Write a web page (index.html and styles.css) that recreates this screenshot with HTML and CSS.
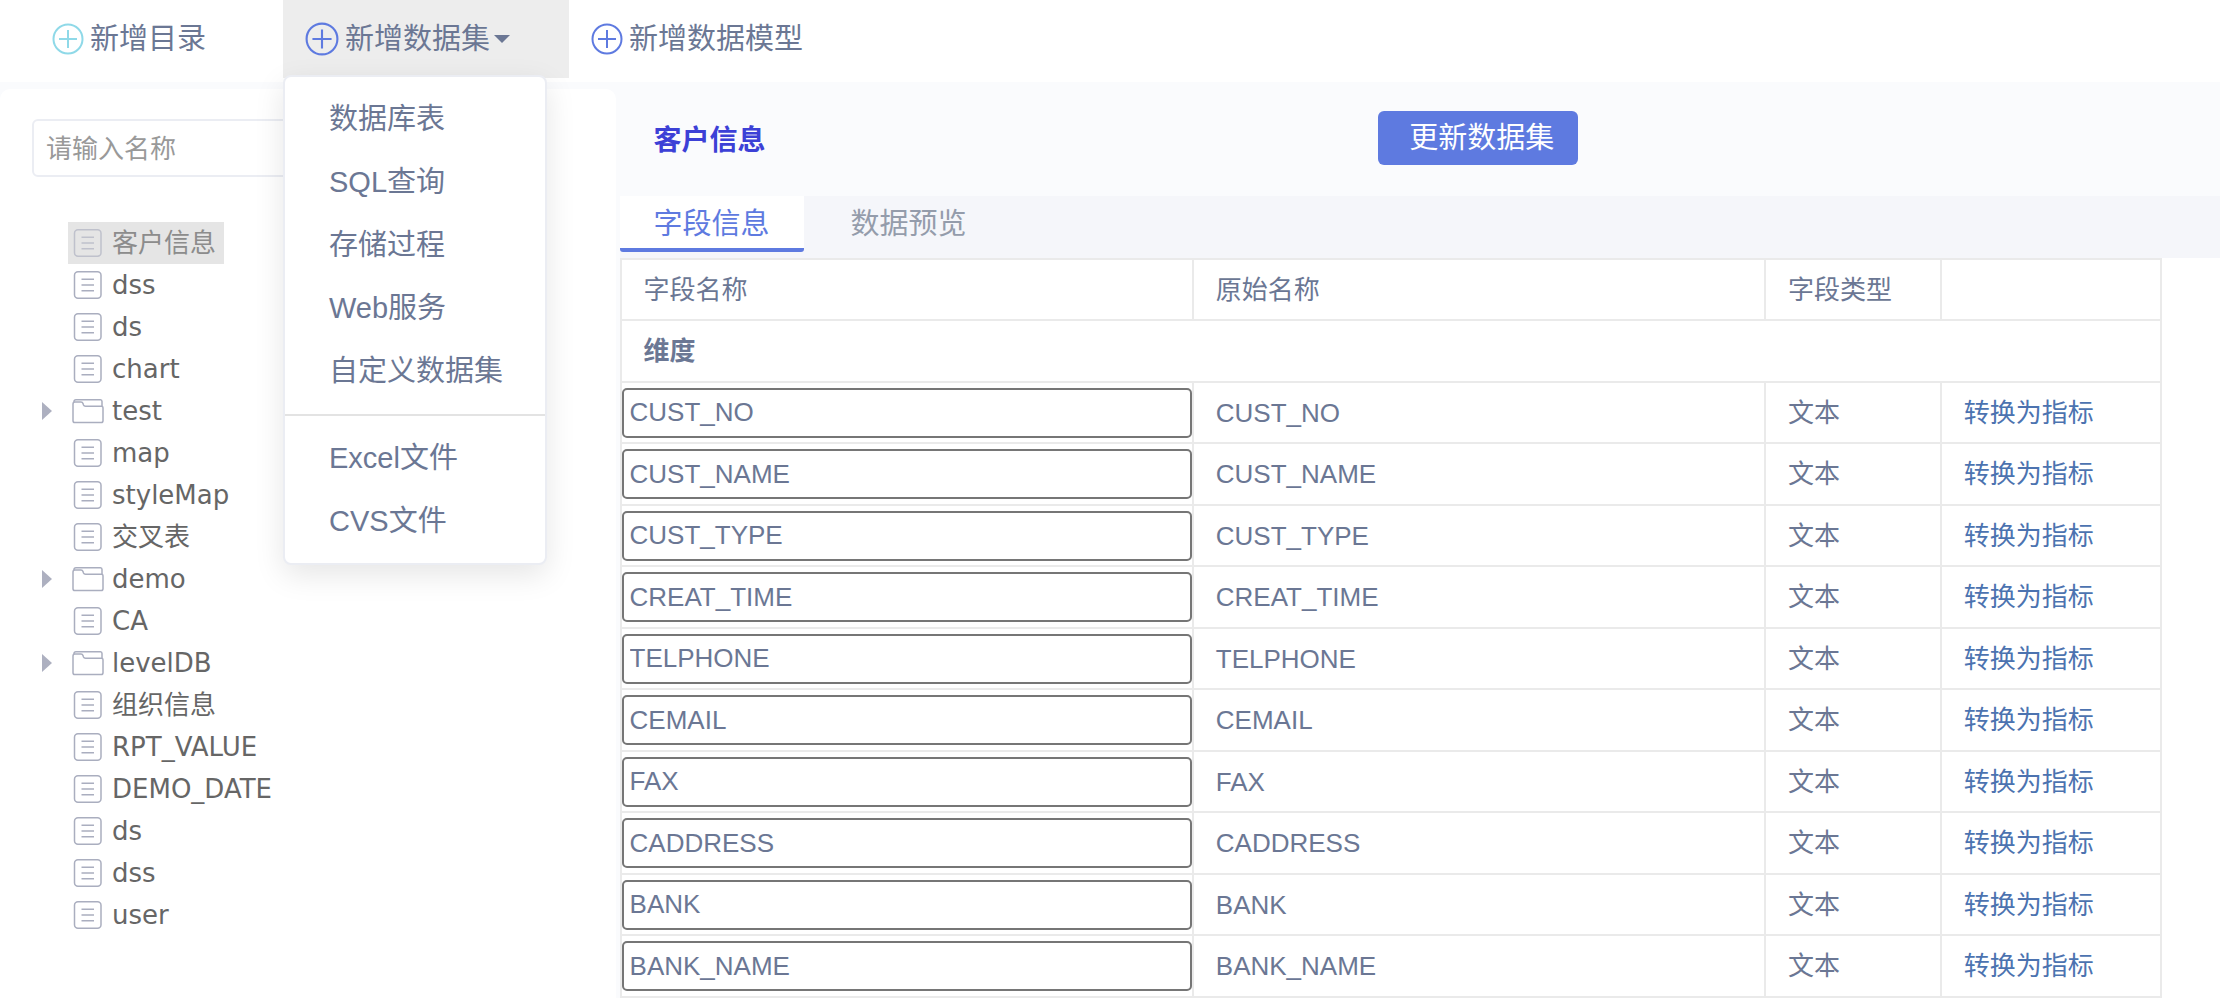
FILE: index.html
```
<!DOCTYPE html>
<html lang="zh-CN">

<head>
<meta charset="UTF-8">
<title>数据集</title>
<link rel="stylesheet" href="styles.css">
</head>
<body>
<!-- icons -->
<svg class="sprite" aria-hidden="true">
<symbol id="icon-add" viewBox="0 0 32 32">
<circle cx="16" cy="16" r="14.5"/>
<path d="M16 7v18M7 16h18"/>
</symbol>
<symbol id="icon-file" viewBox="0 0 32 28">
<rect x="2.5" y="0.8" width="26.5" height="26.4" rx="3.5"/>
<path d="M9.5 8.2h12.5M9.5 14h12.5M9.5 19.8h12.5"/>
</symbol>
<symbol id="icon-folder" viewBox="0 0 32 28">
<path d="M2 5V4.500Q2 2.700 4 2.700H28.500Q30 2.700 30 4.500V9"/>
<path d="M1 7Q1 5 3 5H9Q10.500 5 11 6.500L11.500 8Q12 9.300 13.500 9.300H29.500Q31 9.300 31 10.800V23.700Q31 25.500 29.200 25.500H2.800Q1 25.500 1 23.700Z"/>
</symbol>
</svg>

<header class="toolbar">
<button class="toolbar-item" type="button"><svg class="add-icon add-icon-cyan"><use href="#icon-add"/></svg>新增目录</button>
<div class="dropdown">
<button class="toolbar-item active" type="button" aria-haspopup="true" aria-expanded="true"><svg class="add-icon add-icon-lg"><use href="#icon-add"/></svg>新增数据集<span class="caret"></span></button>
<ul class="menu">
<li><a href="#">数据库表</a></li>
<li><a href="#">SQL查询</a></li>
<li><a href="#">存储过程</a></li>
<li><a href="#">Web服务</a></li>
<li><a href="#">自定义数据集</a></li>
<li class="divider"></li>
<li><a href="#">Excel文件</a></li>
<li><a href="#">CVS文件</a></li>
</ul>
</div>
<button class="toolbar-item" type="button"><svg class="add-icon"><use href="#icon-add"/></svg>新增数据模型</button>
</header>

<div class="workspace">
<aside class="sidebar">
<input class="search" type="text" placeholder="请输入名称" aria-label="请输入名称">
<ul class="tree">
<li><span class="arrow"></span><a class="node selected" href="#"><svg class="node-icon"><use href="#icon-file"/></svg>客户信息</a></li>
<li><span class="arrow"></span><a class="node" href="#"><svg class="node-icon"><use href="#icon-file"/></svg>dss</a></li>
<li><span class="arrow"></span><a class="node" href="#"><svg class="node-icon"><use href="#icon-file"/></svg>ds</a></li>
<li><span class="arrow"></span><a class="node" href="#"><svg class="node-icon"><use href="#icon-file"/></svg>chart</a></li>
<li><span class="arrow closed"></span><a class="node" href="#"><svg class="node-icon"><use href="#icon-folder"/></svg>test</a></li>
<li><span class="arrow"></span><a class="node" href="#"><svg class="node-icon"><use href="#icon-file"/></svg>map</a></li>
<li><span class="arrow"></span><a class="node" href="#"><svg class="node-icon"><use href="#icon-file"/></svg>styleMap</a></li>
<li><span class="arrow"></span><a class="node" href="#"><svg class="node-icon"><use href="#icon-file"/></svg>交叉表</a></li>
<li><span class="arrow closed"></span><a class="node" href="#"><svg class="node-icon"><use href="#icon-folder"/></svg>demo</a></li>
<li><span class="arrow"></span><a class="node" href="#"><svg class="node-icon"><use href="#icon-file"/></svg>CA</a></li>
<li><span class="arrow closed"></span><a class="node" href="#"><svg class="node-icon"><use href="#icon-folder"/></svg>levelDB</a></li>
<li><span class="arrow"></span><a class="node" href="#"><svg class="node-icon"><use href="#icon-file"/></svg>组织信息</a></li>
<li><span class="arrow"></span><a class="node" href="#"><svg class="node-icon"><use href="#icon-file"/></svg>RPT_VALUE</a></li>
<li><span class="arrow"></span><a class="node" href="#"><svg class="node-icon"><use href="#icon-file"/></svg>DEMO_DATE</a></li>
<li><span class="arrow"></span><a class="node" href="#"><svg class="node-icon"><use href="#icon-file"/></svg>ds</a></li>
<li><span class="arrow"></span><a class="node" href="#"><svg class="node-icon"><use href="#icon-file"/></svg>dss</a></li>
<li><span class="arrow"></span><a class="node" href="#"><svg class="node-icon"><use href="#icon-file"/></svg>user</a></li>
</ul>
</aside>

<main class="content">
<div class="content-head">
<h1 class="title">客户信息</h1>
<button class="update-button" type="button">更新数据集</button>
</div>
<div class="tabs" role="tablist">
<button class="tab active" type="button" role="tab" aria-selected="true">字段信息</button>
<button class="tab" type="button" role="tab" aria-selected="false">数据预览</button>
</div>
<div class="table-wrap">
<table class="fields">
<colgroup>
<col class="col-name">
<col class="col-origin">
<col class="col-type">
<col class="col-action">
</colgroup>
<tr><th>字段名称</th><th>原始名称</th><th>字段类型</th><th></th></tr>
<tr><td class="group" colspan="4">维度</td></tr>
<tr><td class="edit"><input class="field-input" type="text" value="CUST_NO" aria-label="CUST_NO"></td><td>CUST_NO</td><td>文本</td><td><a href="#">转换为指标</a></td></tr>
<tr><td class="edit"><input class="field-input" type="text" value="CUST_NAME" aria-label="CUST_NAME"></td><td>CUST_NAME</td><td>文本</td><td><a href="#">转换为指标</a></td></tr>
<tr><td class="edit"><input class="field-input" type="text" value="CUST_TYPE" aria-label="CUST_TYPE"></td><td>CUST_TYPE</td><td>文本</td><td><a href="#">转换为指标</a></td></tr>
<tr><td class="edit"><input class="field-input" type="text" value="CREAT_TIME" aria-label="CREAT_TIME"></td><td>CREAT_TIME</td><td>文本</td><td><a href="#">转换为指标</a></td></tr>
<tr><td class="edit"><input class="field-input" type="text" value="TELPHONE" aria-label="TELPHONE"></td><td>TELPHONE</td><td>文本</td><td><a href="#">转换为指标</a></td></tr>
<tr><td class="edit"><input class="field-input" type="text" value="CEMAIL" aria-label="CEMAIL"></td><td>CEMAIL</td><td>文本</td><td><a href="#">转换为指标</a></td></tr>
<tr><td class="edit"><input class="field-input" type="text" value="FAX" aria-label="FAX"></td><td>FAX</td><td>文本</td><td><a href="#">转换为指标</a></td></tr>
<tr><td class="edit"><input class="field-input" type="text" value="CADDRESS" aria-label="CADDRESS"></td><td>CADDRESS</td><td>文本</td><td><a href="#">转换为指标</a></td></tr>
<tr><td class="edit"><input class="field-input" type="text" value="BANK" aria-label="BANK"></td><td>BANK</td><td>文本</td><td><a href="#">转换为指标</a></td></tr>
<tr><td class="edit"><input class="field-input" type="text" value="BANK_NAME" aria-label="BANK_NAME"></td><td>BANK_NAME</td><td>文本</td><td><a href="#">转换为指标</a></td></tr>
</table>
</div>
</main>
</div>
</body>
</html>
```
FILE: styles.css
```
* {
  box-sizing: border-box;
}

body {
  margin: 0;
  background-color: #fff;
  color: #6b7794;
  font-family: "Liberation Sans", "Noto Sans CJK SC", sans-serif;
  font-size: 26px;
}

button,
input {
  font-family: inherit;
  color: inherit;
}

button {
  border: none;
  background: none;
  cursor: pointer;
}

a {
  color: inherit;
  text-decoration: none;
}

ul {
  list-style: none;
  margin: 0;
  padding: 0;
}

.sprite {
  display: none;
}

/* Toolbar */
.toolbar {
  display: flex;
  height: 82px;
  padding-left: 30px;
}

.toolbar-item {
  display: flex;
  align-items: center;
  height: 78px;
  padding: 0 22px;
  font-size: 29px;
  line-height: 42px;
}

.toolbar-item:first-child {
  width: 253px;
}

.toolbar-item.active {
  width: 286px;
  background-color: #ededed;
}

.add-icon {
  width: 32px;
  height: 32px;
  margin-right: 6px;
  fill: none;
  stroke: #5e7ae0;
  stroke-width: 2;
}

.add-icon-cyan {
  stroke: #8fd9e8;
}

.add-icon-lg {
  width: 34px;
  height: 34px;
}

.caret {
  margin-left: 4px;
  border-top: 8px solid #6b7794;
  border-left: 8px solid transparent;
  border-right: 8px solid transparent;
}

.dropdown {
  position: relative;
}

.menu {
  position: absolute;
  top: 75px;
  left: 0;
  z-index: 10;
  width: 264px;
  padding: 11px 0 10px;
  border: 2px solid #ebedf3;
  border-radius: 8px;
  background-color: #fff;
  box-shadow: 0 10px 30px rgba(0, 0, 0, 0.1);
}

.menu a {
  display: block;
  padding: 0 44px;
  font-size: 29px;
  line-height: 63px;
  white-space: nowrap;
}

.menu .divider {
  height: 2px;
  margin: 11px 0;
  background-color: #e3e3e3;
}

/* Layout */
.workspace {
  display: grid;
  grid-template-columns: 5fr 13fr;
  gap: 4px;
  padding-top: 7px;
  background-color: #fafbfd;
}

.sidebar {
  padding: 30px 32px;
  border-radius: 10px 10px 0 0;
  background-color: #fff;
}

.search {
  display: block;
  width: 80%;
  height: 58px;
  padding: 2px 12px 0;
  border: 2px solid #ebedf3;
  border-radius: 6px;
  background-color: #fff;
  font-size: 26px;
}

.search::placeholder {
  color: #999;
}

/* Tree */
.tree {
  margin-top: 45px;
  color: #666;
  font-family: "DejaVu Sans", "Noto Sans CJK SC", sans-serif;
}

.tree li {
  display: flex;
  align-items: center;
  height: 42px;
}

.arrow {
  width: 10px;
  height: 18px;
  margin: 0 16px 0 10px;
}

.arrow.closed {
  background-color: #adb0c0;
  clip-path: polygon(0 0, 100% 50%, 0 100%);
}

.node {
  display: flex;
  align-items: center;
  height: 42px;
  padding: 0 8px 0 4px;
  line-height: 42px;
}

.node.selected {
  background-color: #e5e5e5;
  color: #8c8c8c;
}

.node-icon {
  width: 32px;
  height: 28px;
  margin-right: 8px;
  fill: #fff;
  stroke: #aaaebf;
  stroke-width: 1.5;
}

.selected .node-icon {
  fill: none;
  stroke: #bfc1cc;
}

/* Content */
.content {
  min-width: 0;
  background-color: #fff;
}

.content-head {
  display: flex;
  align-items: center;
  height: 107px;
  padding-bottom: 10px;
  background-color: #fafbfd;
}

.title {
  flex: 0 0 47.4%;
  margin: 0;
  padding: 6px 0 0 34px;
  color: #3c40d6;
  font-size: 28px;
  line-height: 42px;
}

.update-button {
  height: 54px;
  padding: 0 24px 0 31px;
  border-radius: 6px;
  background-color: #5e7ae0;
  color: #fff;
  font-size: 29px;
  line-height: 42px;
}

.tabs {
  display: flex;
  gap: 13px;
  height: 62px;
  background-color: #f5f6fa;
}

.tab {
  height: 56px;
  padding: 4px 34px 0;
  border-bottom: 4px solid transparent;
  color: #949cab;
  font-size: 29px;
  line-height: 42px;
}

.tab.active {
  border-bottom-color: #5e7ae0;
  border-radius: 0 0 3px 3px;
  background-color: #fff;
  color: #5e7ae0;
}

/* Fields table */
.table-wrap {
  padding-right: 58px;
}

.fields {
  width: 100%;
  border-collapse: collapse;
  table-layout: fixed;
}

.col-name,
.col-origin {
  width: 37.15%;
}

.col-type {
  width: 11.4%;
}

.fields tr {
  height: 61px;
}

.fields tr:nth-child(even) {
  height: 62px;
}

.fields th,
.fields td {
  padding: 0 22px;
  border: 2px solid #eaeaea;
  font-weight: normal;
  line-height: 38px;
  text-align: left;
}

.fields .group {
  font-weight: bold;
}

.fields .edit {
  padding: 0;
}

.fields a {
  color: #4c73b0;
}

.field-input {
  display: block;
  width: 100%;
  height: 50px;
  padding: 0 6px;
  border: 2px solid #767676;
  border-radius: 5px;
  background-color: #fff;
  font-size: 26px;
}
```
